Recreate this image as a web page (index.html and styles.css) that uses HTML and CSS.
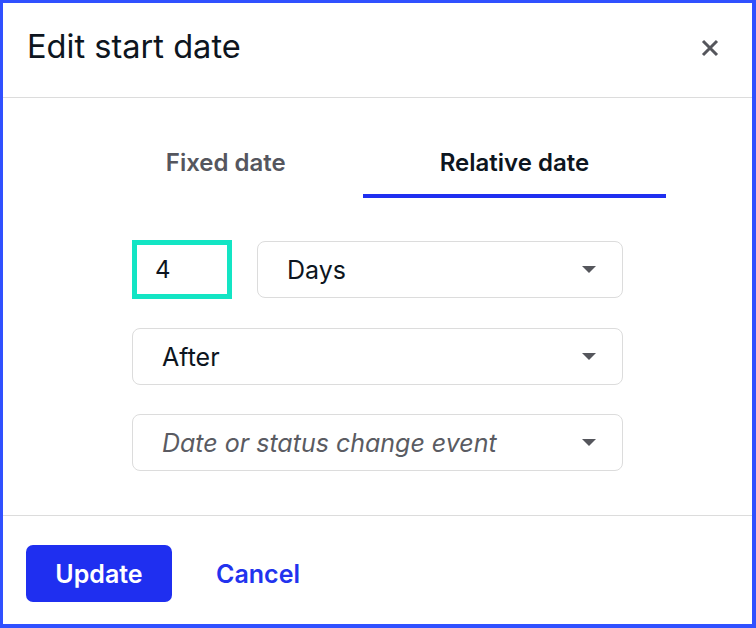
FILE: index.html
```html
<!DOCTYPE html>
<html lang="en">
<head>
<meta charset="utf-8">
<title>Edit start date</title>
<link rel="stylesheet" href="styles.css">
</head>
<body>
<div class="dialog">
  <header class="dialog-header">
    <h1 class="dialog-title">Edit start date</h1>
    <button class="close-btn" aria-label="Close">
      <svg width="18" height="18" viewBox="0 0 18 18"><path d="M2 2 L16 16 M16 2 L2 16" stroke="#55565c" stroke-width="3" stroke-linecap="butt" fill="none"/></svg>
    </button>
  </header>
  <section class="dialog-body">
    <div class="tabs">
      <div class="tab">Fixed date</div>
      <div class="tab active">Relative date</div>
    </div>
    <div class="form">
      <div class="row">
        <div class="num-input">4</div>
        <div class="select grow"><span>Days</span><span class="caret"></span></div>
      </div>
      <div class="select"><span>After</span><span class="caret"></span></div>
      <div class="select"><span class="placeholder">Date or status change event</span><span class="caret"></span></div>
    </div>
  </section>
  <footer class="dialog-footer">
    <button class="btn-primary">Update</button>
    <button class="btn-link">Cancel</button>
  </footer>
</div>
</body>
</html>
```
FILE: styles.css
```css
* { box-sizing: border-box; }
html, body { margin: 0; padding: 0; }
body {
  font-family: Inter, "Noto Sans", sans-serif;
  color: #0d1520;
  background: #fff;
}
.dialog {
  width: 756px;
  height: 628px;
  border-style: solid;
  border-color: #3050ff;
  border-width: 3px 4px 4px 3px;
  display: flex;
  flex-direction: column;
}
.dialog-header {
  height: 95px;
  border-bottom: 1px solid #dcdcdc;
  display: flex;
  align-items: center;
  justify-content: space-between;
  padding: 0 31px 8px 24px;
}
.dialog-title {
  margin: 0;
  font-size: 32.6px;
  font-weight: 400;
  color: #0d1520;
}
.close-btn {
  border: none;
  background: none;
  padding: 0;
  width: 22px;
  height: 22px;
  margin-top: 4px;
  display: flex;
  align-items: center;
  justify-content: center;
  cursor: pointer;
}
.dialog-body {
  padding: 48px 0 44px;
  border-bottom: 1px solid #dcdcdc;
  display: flex;
  flex-direction: column;
  align-items: center;
}
.tabs {
  display: flex;
}
.tab {
  padding: 1px 77px 15px;
  font-size: 24px;
  line-height: 32px;
  font-weight: 600;
  color: #55565e;
  border-bottom: 4px solid transparent;
}
.tab.active {
  color: #0d1520;
  border-bottom-color: #1f2ff0;
}
.form {
  width: 491px;
  margin-top: 42px;
  display: flex;
  flex-direction: column;
  gap: 29px;
}
.row {
  display: flex;
  align-items: center;
  gap: 25px;
}
.num-input {
  width: 100px;
  height: 59px;
  border: 5px solid #13e5c4;
  font-size: 24px;
  padding-left: 18px;
  display: flex;
  align-items: center;
}
.select {
  height: 57px;
  border: 1px solid #dcdcdc;
  border-radius: 8px;
  display: flex;
  align-items: center;
  justify-content: space-between;
  padding: 0 26px 0 29px;
  font-size: 25px;
  color: #0d1520;
}
.grow { flex: 1; }
.placeholder {
  font-style: italic;
  color: #5a5b62;
}
.caret {
  width: 0;
  height: 0;
  border-left: 7px solid transparent;
  border-right: 7px solid transparent;
  border-top: 7px solid #55565c;
}
.dialog-footer {
  flex: 1;
  display: flex;
  align-items: flex-start;
  gap: 44px;
  padding: 29px 0 0 23px;
}
.btn-primary {
  width: 146px;
  height: 57px;
  border: none;
  border-radius: 7px;
  background: #1f2ff0;
  color: #fff;
  font-family: inherit;
  font-size: 25px;
  font-weight: 600;
}
.btn-link {
  border: none;
  background: none;
  padding: 0;
  height: 57px;
  color: #2233ee;
  font-family: inherit;
  font-size: 25px;
  font-weight: 600;
}
```
